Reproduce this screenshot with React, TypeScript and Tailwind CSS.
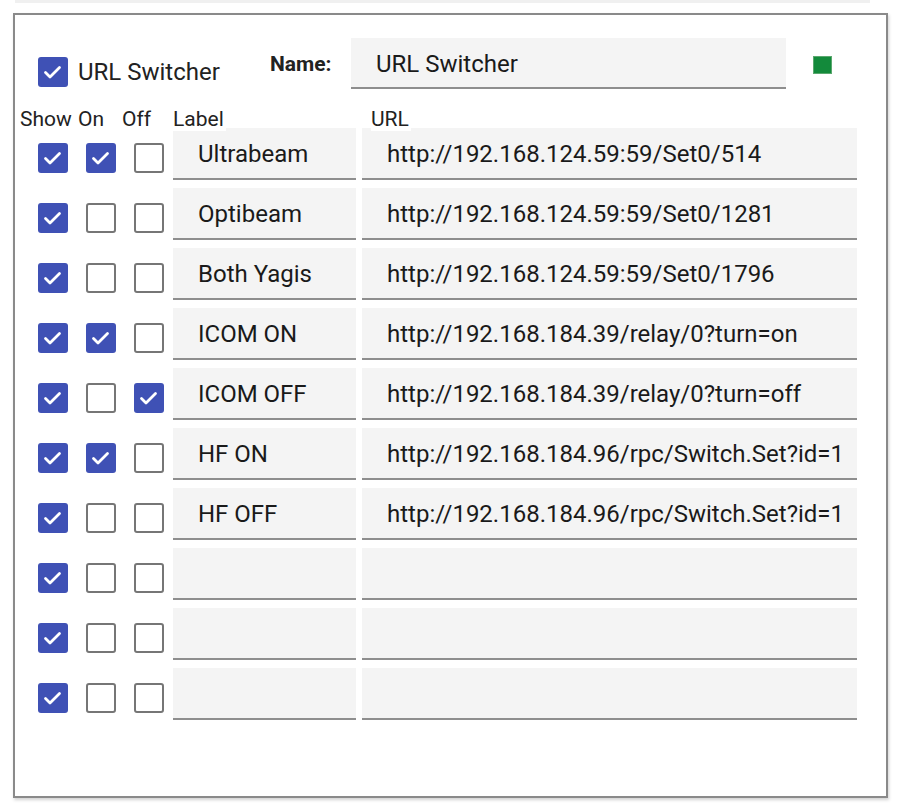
import React from "react";

type Row = { show: boolean; on: boolean; off: boolean; label: string; url: string };

const rows: Row[] = [
  { show: true, on: true, off: false, label: "Ultrabeam", url: "http://192.168.124.59:59/Set0/514" },
  { show: true, on: false, off: false, label: "Optibeam", url: "http://192.168.124.59:59/Set0/1281" },
  { show: true, on: false, off: false, label: "Both Yagis", url: "http://192.168.124.59:59/Set0/1796" },
  { show: true, on: true, off: false, label: "ICOM ON", url: "http://192.168.184.39/relay/0?turn=on" },
  { show: true, on: false, off: true, label: "ICOM OFF", url: "http://192.168.184.39/relay/0?turn=off" },
  { show: true, on: true, off: false, label: "HF ON", url: "http://192.168.184.96/rpc/Switch.Set?id=1" },
  { show: true, on: false, off: false, label: "HF OFF", url: "http://192.168.184.96/rpc/Switch.Set?id=1" },
  { show: true, on: false, off: false, label: "", url: "" },
  { show: true, on: false, off: false, label: "", url: "" },
  { show: true, on: false, off: false, label: "", url: "" },
];

function Check({ checked }: { checked: boolean }) {
  if (checked) {
    return (
      <div className="w-[30px] h-[30px] rounded-[3px] bg-[#3f51b5] shrink-0">
        <svg width="30" height="30" viewBox="0 0 30 30">
          <polyline
            points="7.5,15.5 12,20 21.5,10.5"
            fill="none"
            stroke="white"
            strokeWidth="2.8"
            strokeLinecap="round"
            strokeLinejoin="round"
          />
        </svg>
      </div>
    );
  }
  return <div className="w-[30px] h-[30px] rounded-[3px] border-[2.5px] border-[#767676] bg-white shrink-0" />;
}

function Field({ value, width }: { value: string; width: string }) {
  return (
    <div
      className={`${width} h-[52px] bg-[#f4f4f4] border-b-2 border-[#8e8e8e] flex items-center pt-[2px] pl-[25px] pr-[10px] overflow-hidden whitespace-nowrap text-[24px] text-[#1a1a1a]`}
    >
      {value}
    </div>
  );
}

export default function App() {
  return (
    <div className="w-[906px] h-[805px] bg-white overflow-hidden" style={{ fontFamily: "Roboto, 'Noto Sans', sans-serif" }}>
      <div className="ml-[15px] w-[855px] h-[3px] bg-[#f0f0f0]" />
      <div className="ml-[13px] mt-[10px] w-[875px] h-[785px] border-2 border-[#8a8a8a] shadow-[1px_2px_3px_rgba(0,0,0,0.18)] pt-[23px]">
        {/* header */}
        <div className="flex items-start h-[51px]">
          <div className="w-[232px] ml-[23px] mt-[18px] flex items-center">
            <Check checked />
            <span className="ml-[10px] text-[24px] text-[#222] leading-[30px] pt-[1px]">URL Switcher</span>
          </div>
          <div className="w-[81px] h-[51px] flex items-center pt-[2px] text-[21px] font-bold text-[#222]">Name:</div>
          <div className="w-[435px] h-[51px] bg-[#f4f4f4] border-b-2 border-[#8e8e8e] flex items-center pt-[2px] pl-[25px] text-[24px] text-[#1a1a1a]">
            URL Switcher
          </div>
          <div className="ml-[27px] mt-[18px] w-[19px] h-[18px] bg-[#138a3b] border border-[#5aa86e]" />
        </div>

        {/* column headers */}
        <div className="mt-[18px] h-[21px] flex items-start text-[21px] text-[#222] leading-[24px] relative z-10">
          <span className="ml-[5px] w-[58px]">Show</span>
          <span className="w-[44px]">On</span>
          <span className="w-[51px]">Off</span>
          <span className="w-[198px]"><span className="bg-white pr-[2px]">Label</span></span>
          <span><span className="bg-white pr-[2px]">URL</span></span>
        </div>

        {/* rows */}
        <div className="flex flex-col gap-[8px]">
          {rows.map((r, i) => (
            <div key={i} className="flex items-start h-[52px]">
              <div className="ml-[23px] mt-[15px] flex gap-[18px]">
                <Check checked={r.show} />
                <Check checked={r.on} />
                <Check checked={r.off} />
              </div>
              <div className="ml-[9px]">
                <Field value={r.label} width="w-[183px]" />
              </div>
              <div className="ml-[6px]">
                <Field value={r.url} width="w-[495px]" />
              </div>
            </div>
          ))}
        </div>
      </div>
    </div>
  );
}
